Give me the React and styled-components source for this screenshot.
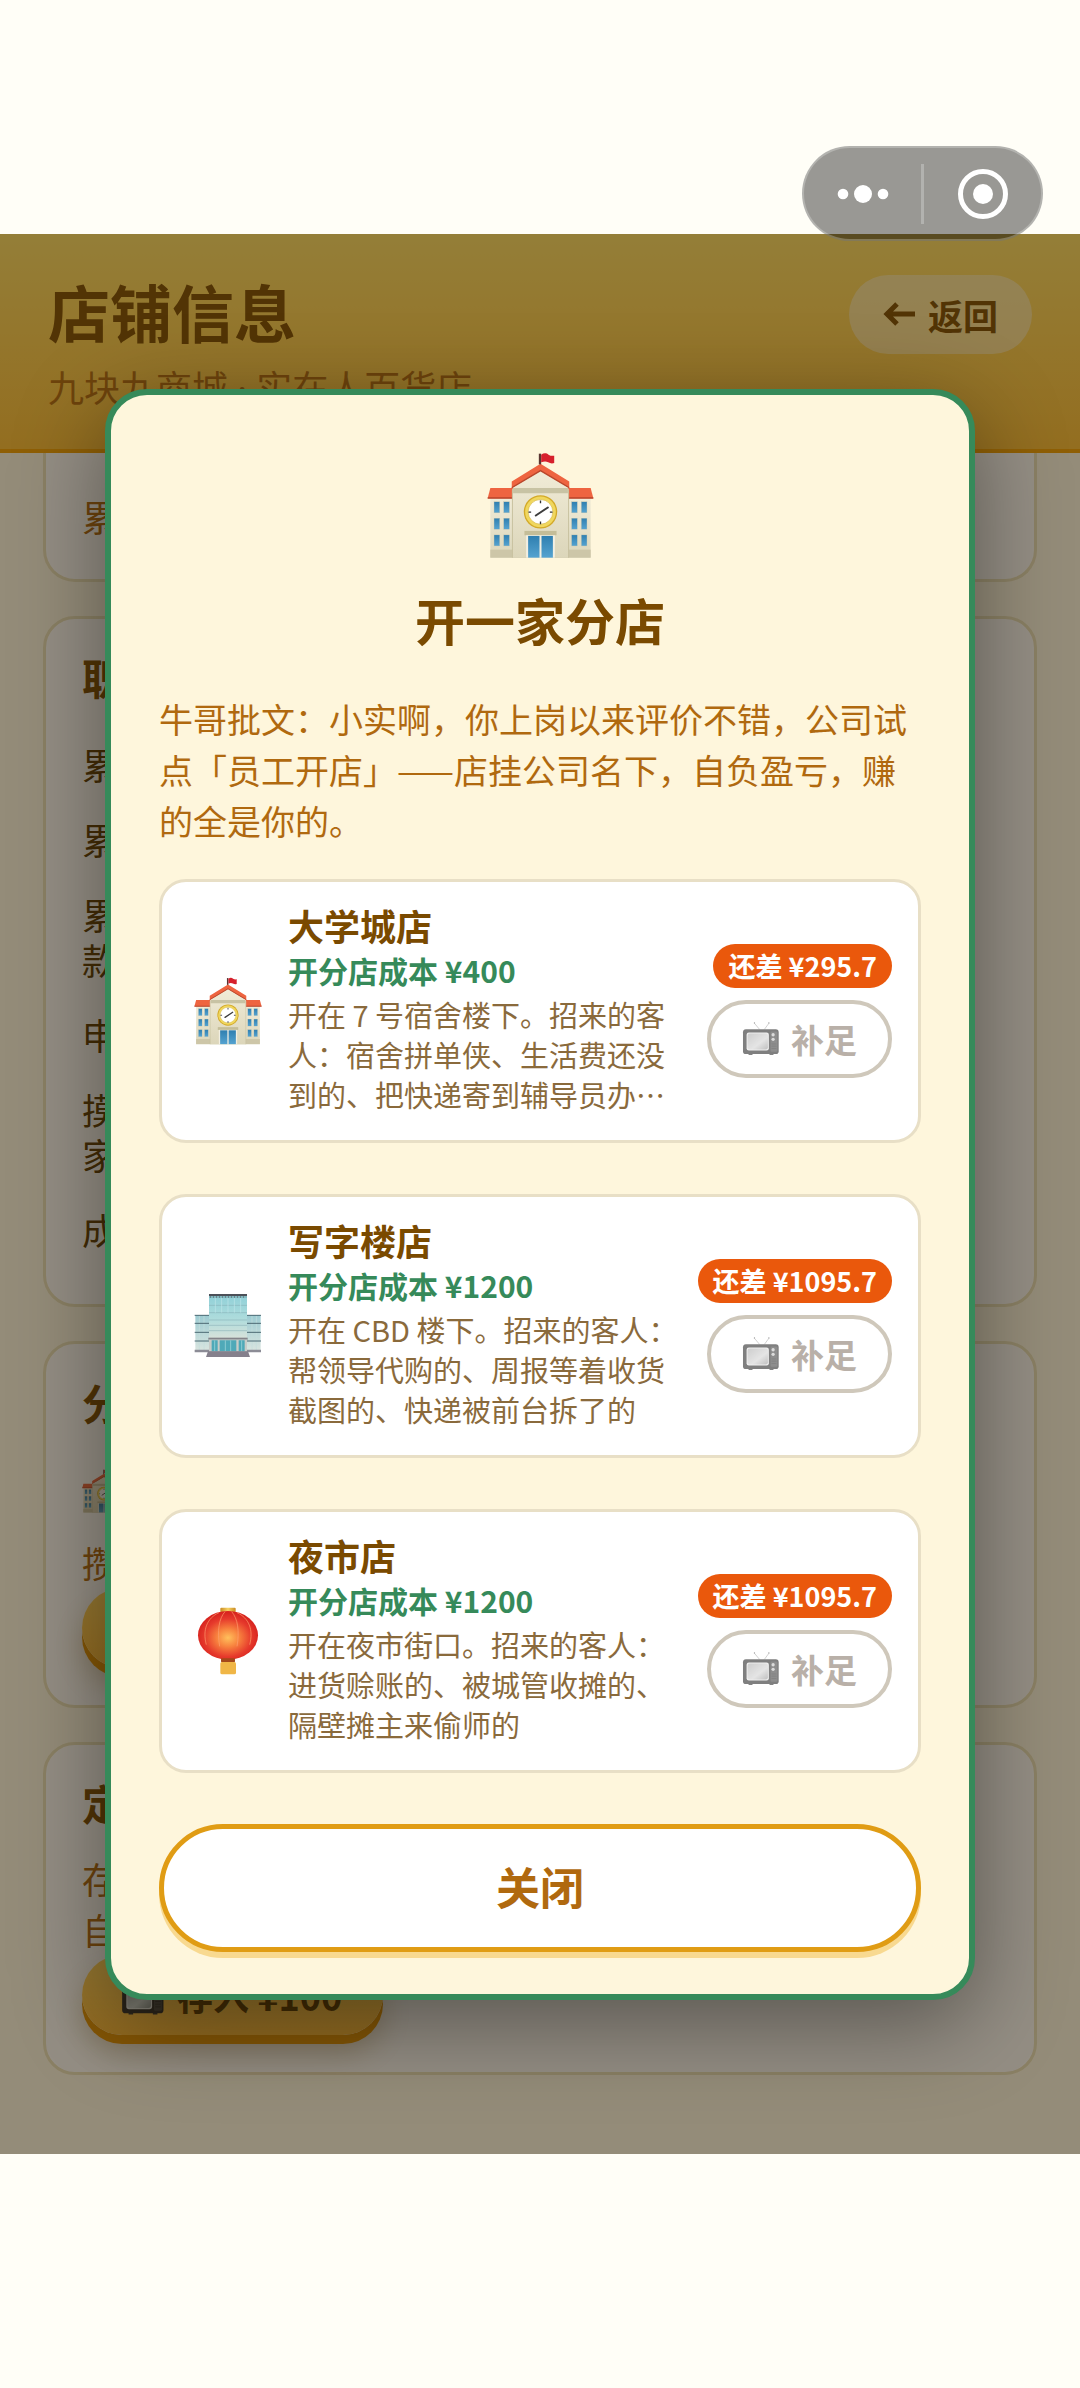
import React from "react";
import styled, { createGlobalStyle, css } from "styled-components";

const GlobalStyle = createGlobalStyle`
  *, *::before, *::after { box-sizing: border-box; }
  body {
    margin: 0;
    background: #fffef7;
    font-family: "Noto Sans CJK SC", "Noto Sans", sans-serif;
  }
  h1, h2, h3, p, ul { margin: 0; padding: 0; }
  ul { list-style: none; }
  button { font-family: inherit; cursor: pointer; }
`;

const Page = styled.div`
  position: relative;
  min-height: 100vh;
  padding: 234px 0;
  background: #fffef7;
`;

/* ---------- mini-program capsule ---------- */

const Capsule = styled.div`
  position: absolute;
  top: 146px;
  right: 37px;
  z-index: 3;
  display: flex;
  align-items: center;
  width: 241px;
  height: 95px;
  border: 2px solid rgba(255, 255, 255, 0.25);
  border-radius: 48px;
  background: rgba(0, 0, 0, 0.4);
`;

const CapsuleButton = styled.button`
  flex: 1;
  display: flex;
  align-items: center;
  justify-content: center;
  height: 100%;
  padding: 0;
  border: 0;
  background: none;
`;

const CapsuleDivider = styled.span`
  width: 3px;
  height: 60px;
  background: rgba(255, 255, 255, 0.25);
`;

/* ---------- store screen ---------- */

const Stage = styled.main`
  position: relative;
  display: flex;
  flex-direction: column;
  aspect-ratio: 9 / 16;
  overflow: hidden;
  background: #fffbe8;
`;

const Header = styled.header`
  padding: 38px 48px 33px;
  border-bottom: 4px solid #f5a000;
  background: linear-gradient(180deg, #ffdf66 0%, #fdbe36 100%);
`;

const HeaderRow = styled.div`
  display: flex;
  align-items: center;
  justify-content: space-between;
`;

const HeaderTitle = styled.h1`
  padding-bottom: 6px;
  font-size: 62px;
  line-height: 78px;
  font-weight: 700;
  color: #7a4a00;
`;

const BackButton = styled.button`
  display: flex;
  align-items: center;
  gap: 12px;
  height: 79px;
  padding: 0 34px;
  border: 0;
  border-radius: 40px;
  background: rgba(255, 255, 255, 0.4);
  font-size: 35px;
  font-weight: 700;
  color: #7a4a00;
`;

const HeaderSub = styled.p`
  margin-top: 6px;
  font-family: "Noto Sans", "Noto Sans CJK SC", sans-serif;
  font-size: 36px;
  line-height: 54px;
  color: #b0690f;
`;

const Body = styled.div`
  display: flex;
  flex-direction: column;
  gap: 34px;
  padding: 0 43px;
`;

const Panel = styled.section`
  padding: 33px 36px;
  border: 3px solid #ebe2be;
  border-radius: 32px;
  background: #ffffff;
  ${(p) =>
    p.$scrolled &&
    css`
      border-top: 0;
      border-radius: 0 0 32px 32px;
      padding: 38px 36px 37px;
    `}
`;

const PanelTitle = styled.h2`
  margin-bottom: 25px;
  font-size: 42px;
  line-height: 50px;
  font-weight: 700;
  color: #7a4a00;
`;

const PanelText = styled.p`
  font-size: 36px;
  line-height: 51px;
  color: #b0690f;
  white-space: pre-line;
`;

const StatList = styled.ul`
  margin-bottom: 4px;
`;

const Stat = styled.li`
  padding: 15px 0;
  font-size: 36px;
  line-height: 45px;
  color: #5c3a00;
  white-space: pre-line;
`;

const BranchIcons = styled.div`
  display: flex;
  align-items: center;
  height: 78px;
  margin-bottom: 7px;
`;

const GoldButton = styled.button`
  display: flex;
  align-items: center;
  gap: 12px;
  height: 80px;
  min-width: 301px;
  margin-bottom: 4px;
  padding: 0 39px;
  border: 0;
  border-radius: 40px;
  background: linear-gradient(180deg, #ffd35c 0%, #fdb938 100%);
  box-shadow: 0 9px 0 #df8f00, 0 18px 30px rgba(120, 80, 0, 0.3);
  font-size: 36px;
  font-weight: 700;
  color: #5c3a00;
`;

/* ---------- dialog ---------- */

const Overlay = styled.div`
  position: absolute;
  inset: 0;
  z-index: 2;
  display: flex;
  align-items: center;
  justify-content: center;
  padding: 0 105px;
  background: rgba(42, 30, 10, 0.5);
`;

const Dialog = styled.section`
  flex: 1;
  display: flex;
  flex-direction: column;
  padding: 48px 48px 42px;
  border: 6px solid #368a5a;
  border-radius: 42px;
  background: #fef6dc;
  box-shadow: 0 24px 90px rgba(0, 0, 0, 0.4);
`;

const DialogIcon = styled.div`
  display: flex;
  align-items: center;
  justify-content: center;
  height: 125px;
`;

const DialogTitle = styled.h2`
  margin-top: 18px;
  font-size: 50px;
  line-height: 66px;
  font-weight: 700;
  text-align: center;
  color: #7a4a00;
`;

const DialogText = styled.p`
  margin-top: 41px;
  font-size: 34px;
  line-height: 51px;
  color: #b0690f;
`;

const ShopList = styled.ul`
  display: flex;
  flex-direction: column;
  gap: 51px;
  margin: 33px 0 51px;
`;

const Shop = styled.li`
  display: flex;
  align-items: center;
  padding: 18px 26px 18px 30px;
  border: 3px solid #e8dfc6;
  border-radius: 27px;
  background: #ffffff;
`;

const ShopIcon = styled.div`
  flex: none;
  display: flex;
  justify-content: center;
  width: 72px;
`;

const ShopInfo = styled.div`
  flex: 1;
  min-width: 0;
  margin: 0 16px 0 24px;
  padding-bottom: 8px;
`;

const ShopName = styled.h3`
  font-size: 36px;
  line-height: 50px;
  font-weight: 700;
  color: #7a4a00;
`;

const ShopCost = styled.p`
  font-size: 30px;
  line-height: 40px;
  font-weight: 700;
  color: #368a5a;
`;

const ShopDesc = styled.p`
  display: -webkit-box;
  -webkit-box-orient: vertical;
  -webkit-line-clamp: 3;
  overflow: hidden;
  margin-top: 4px;
  font-size: 29px;
  line-height: 40px;
  color: #8a6a3c;
`;

const ShopAction = styled.div`
  flex: none;
  display: flex;
  flex-direction: column;
  align-items: flex-end;
  gap: 12px;
`;

const Shortfall = styled.span`
  padding: 0 15px;
  border-radius: 22px;
  background: #ea580c;
  font-size: 27px;
  line-height: 44px;
  font-weight: 700;
  color: #ffffff;
`;

const TopUpButton = styled.button`
  display: flex;
  align-items: center;
  gap: 11px;
  height: 78px;
  padding: 0 31px;
  border: 4px solid #cfc8bb;
  border-radius: 39px;
  background: #ffffff;
  font-size: 33px;
  font-weight: 700;
  color: #b9b0a8;
  cursor: default;

  svg {
    filter: grayscale(1);
    opacity: 0.6;
  }
`;

const CloseButton = styled.button`
  height: 128px;
  padding: 0 0 4px;
  border: 5px solid #e09c14;
  border-radius: 64px;
  background: #ffffff;
  box-shadow: 0 6px 0 #f8d990;
  font-size: 44px;
  font-weight: 700;
  color: #b0690f;
`;

/* ---------- drawings ---------- */

function SchoolIcon({ size }) {
  const rows = [217, 266, 316];
  const cols = [161, 190, 393, 422];
  return (
    <svg width={size} height={size} viewBox="140 68 320 320" aria-hidden="true">
      <defs>
        <linearGradient id="schoolWall" x1="0" y1="0" x2="0" y2="1">
          <stop offset="0" stopColor="#f1ecd8" />
          <stop offset="1" stopColor="#dcd6ba" />
        </linearGradient>
        <linearGradient id="schoolGlass" x1="0" y1="0" x2="0" y2="1">
          <stop offset="0" stopColor="#2f7fb0" />
          <stop offset="1" stopColor="#55a3d0" />
        </linearGradient>
      </defs>
      <rect x="150" y="200" width="300" height="184" fill="url(#schoolWall)" />
      <rect x="150" y="360" width="300" height="24" fill="#cdc6a8" />
      <path d="M150 176h68v30h-76z" fill="#ee6440" />
      <path d="M382 176h68l8 30h-76z" fill="#ee6440" />
      <path d="M142 203h76v5h-76zM382 203h76v5h-76z" fill="#b8432a" />
      {cols.map((x) =>
        rows.map((y) => (
          <rect key={`${x}-${y}`} x={x} y={y} width="17" height="33" fill="url(#schoolGlass)" stroke="#c9c6ae" strokeWidth="1" />
        ))
      )}
      <path d="M216 178l84-62 84 62v206H216z" fill="url(#schoolWall)" />
      <path d="M216 180v204M384 180v204" stroke="#c8c1a0" strokeWidth="3" />
      <path d="M218 176h164v15H218z" fill="#c8c3a4" />
      <path d="M214 156l86-53 86 53v20l-86-52-86 52z" fill="#ee6440" />
      <path d="M214 173l86-52 86 52v4l-86-51-86 51z" fill="#b9472c" />
      <rect x="295" y="73" width="7" height="32" fill="#5a3530" />
      <path d="M302 76c8-6 16-5 22 0 6 4 11 4 17 3v22c-7 2-12 1-18-2-7-4-13-3-21 0z" fill="#d6202c" />
      <circle cx="300" cy="247" r="50" fill="#d3a928" />
      <circle cx="300" cy="247" r="46" fill="#f0d75e" />
      <circle cx="300" cy="247" r="37" fill="#ffffff" stroke="#d8b845" strokeWidth="2" />
      <path d="M300 213v8M300 276v8M264 248h8M328 248h8" stroke="#333" strokeWidth="4" />
      <path d="M286 258l36-24" stroke="#3c3c3c" strokeWidth="6" strokeLinecap="round" />
      <rect x="252" y="304" width="96" height="13" fill="#c4bd98" />
      <rect x="257" y="317" width="86" height="67" fill="#f2efe2" />
      <rect x="263" y="319" width="34" height="65" fill="url(#schoolGlass)" />
      <rect x="303" y="319" width="34" height="65" fill="url(#schoolGlass)" />
    </svg>
  );
}

function OfficeIcon({ size }) {
  return (
    <svg width={size} height={size} viewBox="42 36 204 204" aria-hidden="true">
      <defs>
        <linearGradient id="officeGlass" x1="0" y1="0" x2="0" y2="1">
          <stop offset="0" stopColor="#8fd0d8" />
          <stop offset="0.55" stopColor="#aedcdc" />
          <stop offset="1" stopColor="#d8e2da" />
        </linearGradient>
        <linearGradient id="officeWing" x1="0" y1="0" x2="0" y2="1">
          <stop offset="0" stopColor="#9ccbd2" />
          <stop offset="1" stopColor="#dbe6e0" />
        </linearGradient>
      </defs>
      <rect x="46" y="105" width="196" height="110" fill="url(#officeWing)" />
      <path d="M58 106v106M72 106v106M216 106v106M229 106v106" stroke="#c4dedd" strokeWidth="2" />
      <path d="M44 106h44M44 130h44M44 157h44M44 183h44M200 106h43M200 130h43M200 157h43M200 183h43" stroke="#4d6a74" strokeWidth="3" />
      <path d="M44 213h199" stroke="#8c8c96" strokeWidth="7" />
      <rect x="87" y="44" width="114" height="132" fill="url(#officeGlass)" />
      <path d="M87 76h114M87 98h114M87 120h114M87 136h114M87 152h114" stroke="#82aab0" strokeWidth="1.5" />
      <path d="M106 54v44M125 54v44M144 54v44M163 54v44M182 54v44" stroke="#bfe6ea" strokeWidth="2" />
      <path d="M87 45h114" stroke="#4b5058" strokeWidth="6" />
      <path d="M89 51h110" stroke="#5b7078" strokeWidth="4" strokeDasharray="5 4" />
      <rect x="85" y="173" width="118" height="6" fill="#84848a" />
      <rect x="87" y="179" width="114" height="36" fill="#c9ccc8" />
      <path d="M95 181h18v33H95zM119 181h50v33h-50zM176 181h18v33h-18z" fill="#4fa9b8" />
      <path d="M104 181v33M136 181v33M152 181v33M185 181v33" stroke="#8ccbd2" strokeWidth="3" />
      <path d="M84 214h120l6 17H78z" fill="#85808c" />
    </svg>
  );
}

function LanternIcon({ size }) {
  return (
    <svg width={size} height={size} viewBox="41 49 204 204" aria-hidden="true">
      <defs>
        <radialGradient id="lanternGlow" cx="0.5" cy="0.55" r="0.52">
          <stop offset="0" stopColor="#ffc05c" />
          <stop offset="0.35" stopColor="#f8843f" />
          <stop offset="0.75" stopColor="#e63a2c" />
          <stop offset="1" stopColor="#d8241f" />
        </radialGradient>
        <linearGradient id="lanternGold" x1="0" y1="0" x2="1" y2="0">
          <stop offset="0" stopColor="#c98a22" />
          <stop offset="0.5" stopColor="#f7d264" />
          <stop offset="1" stopColor="#c98a22" />
        </linearGradient>
      </defs>
      <rect x="120" y="51" width="46" height="14" rx="3" fill="url(#lanternGold)" />
      <ellipse cx="143" cy="134" rx="90" ry="73" fill="url(#lanternGlow)" />
      <path
        d="M116 66c-36 16-50 52-38 96M134 63c-18 20-24 58-16 104M154 63c18 20 24 58 16 104M170 66c36 16 50 52 38 96"
        fill="none"
        stroke="#ffa070"
        strokeWidth="2"
      />
      <rect x="122" y="203" width="42" height="12" rx="3" fill="#a4481a" />
      <rect x="120" y="214" width="47" height="37" rx="5" fill="#f0b646" />
    </svg>
  );
}

function TvIcon({ width }) {
  return (
    <svg width={width} viewBox="126 284 116 108" aria-hidden="true">
      <defs>
        <linearGradient id="tvScreen" x1="0" y1="0" x2="1" y2="1">
          <stop offset="0" stopColor="#a6b0b2" />
          <stop offset="0.6" stopColor="#cdd6d6" />
          <stop offset="1" stopColor="#8f999a" />
        </linearGradient>
      </defs>
      <path d="M164 291l16 19M208 291l-14 19" stroke="#8a8a8a" strokeWidth="2" />
      <circle cx="164" cy="290" r="2" fill="#555" />
      <circle cx="208" cy="290" r="2" fill="#555" />
      <path d="M146 382h12v6h-12zM210 382h12v6h-12z" fill="#333" />
      <rect x="129" y="309" width="109" height="76" rx="9" fill="#2b2b2b" />
      <rect x="140" y="319" width="68" height="55" rx="7" fill="#e2e6e6" />
      <rect x="143" y="322" width="62" height="49" rx="7" fill="url(#tvScreen)" />
      <rect x="213" y="316" width="21" height="62" rx="4" fill="#444" />
      <circle cx="221" cy="326" r="5" fill="#c6c6c6" />
      <circle cx="221" cy="340" r="5" fill="#c6c6c6" />
      <path d="M216 354h15M216 361h15M216 368h15" stroke="#2b2b2b" strokeWidth="2" />
    </svg>
  );
}

function ArrowIcon() {
  return (
    <svg width="33" height="24" viewBox="0 0 33 24" fill="none" stroke="currentColor" strokeWidth="5" aria-hidden="true">
      <path d="M32 12H4M14 2L4 12l10 10" />
    </svg>
  );
}

/* ---------- data ---------- */

const stats = ["累", "累", "累\n款", "申", "摸\n家", "成"];

const shops = [
  {
    name: "大学城店",
    cost: "¥400",
    missing: "¥295.7",
    Icon: SchoolIcon,
    desc: "开在 7 号宿舍楼下。招来的客人：宿舍拼单侠、生活费还没到的、把快递寄到辅导员办⋯",
  },
  {
    name: "写字楼店",
    cost: "¥1200",
    missing: "¥1095.7",
    Icon: OfficeIcon,
    desc: "开在 CBD 楼下。招来的客人：帮领导代购的、周报等着收货截图的、快递被前台拆了的",
  },
  {
    name: "夜市店",
    cost: "¥1200",
    missing: "¥1095.7",
    Icon: LanternIcon,
    desc: "开在夜市街口。招来的客人：进货赊账的、被城管收摊的、隔壁摊主来偷师的",
  },
];

export default function App() {
  return (
    <Page>
      <GlobalStyle />
      <Capsule>
        <CapsuleButton type="button" aria-label="更多">
          <svg width="52" height="20" viewBox="0 0 52 20" fill="#fff">
            <circle cx="6" cy="10" r="5.3" />
            <circle cx="26" cy="10" r="9" />
            <circle cx="46" cy="10" r="5.3" />
          </svg>
        </CapsuleButton>
        <CapsuleDivider />
        <CapsuleButton type="button" aria-label="关闭小程序">
          <svg width="50" height="50" viewBox="0 0 50 50">
            <circle cx="25" cy="25" r="22.5" fill="none" stroke="#fff" strokeWidth="5" />
            <circle cx="25" cy="25" r="10" fill="#fff" />
          </svg>
        </CapsuleButton>
      </Capsule>

      <Stage>
        <Header>
          <HeaderRow>
            <HeaderTitle>店铺信息</HeaderTitle>
            <BackButton type="button">
              <ArrowIcon />
              返回
            </BackButton>
          </HeaderRow>
          <HeaderSub>九块九商城 · 实在人百货店</HeaderSub>
        </Header>

        <Body>
          <Panel $scrolled>
            <PanelText>累</PanelText>
          </Panel>
          <Panel>
            <PanelTitle>职</PanelTitle>
            <StatList>
              {stats.map((s, i) => (
                <Stat key={i}>{s}</Stat>
              ))}
            </StatList>
          </Panel>
          <Panel>
            <PanelTitle>分</PanelTitle>
            <BranchIcons>
              <SchoolIcon size={44} />
            </BranchIcons>
            <PanelText>攒</PanelText>
            <GoldButton type="button" aria-label="开分店" />
          </Panel>
          <Panel>
            <PanelTitle>定</PanelTitle>
            <PanelText>{"存\n自"}</PanelText>
            <GoldButton type="button">
              <TvIcon width={44} />
              存入 ¥100
            </GoldButton>
          </Panel>
        </Body>

        <Overlay>
          <Dialog role="dialog" aria-modal="true" aria-labelledby="branch-title">
            <DialogIcon>
              <SchoolIcon size={107} />
            </DialogIcon>
            <DialogTitle id="branch-title">开一家分店</DialogTitle>
            <DialogText>
              牛哥批文：小实啊，你上岗以来评价不错，公司试点「员工开店」——店挂公司名下，自负盈亏，赚的全是你的。
            </DialogText>
            <ShopList>
              {shops.map(({ name, cost, missing, desc, Icon }) => (
                <Shop key={name}>
                  <ShopIcon>
                    <Icon size={68} />
                  </ShopIcon>
                  <ShopInfo>
                    <ShopName>{name}</ShopName>
                    <ShopCost>开分店成本 {cost}</ShopCost>
                    <ShopDesc>{desc}</ShopDesc>
                  </ShopInfo>
                  <ShopAction>
                    <Shortfall>还差 {missing}</Shortfall>
                    <TopUpButton type="button" disabled>
                      <TvIcon width={38} />
                      补足
                    </TopUpButton>
                  </ShopAction>
                </Shop>
              ))}
            </ShopList>
            <CloseButton type="button">关闭</CloseButton>
          </Dialog>
        </Overlay>
      </Stage>
    </Page>
  );
}
